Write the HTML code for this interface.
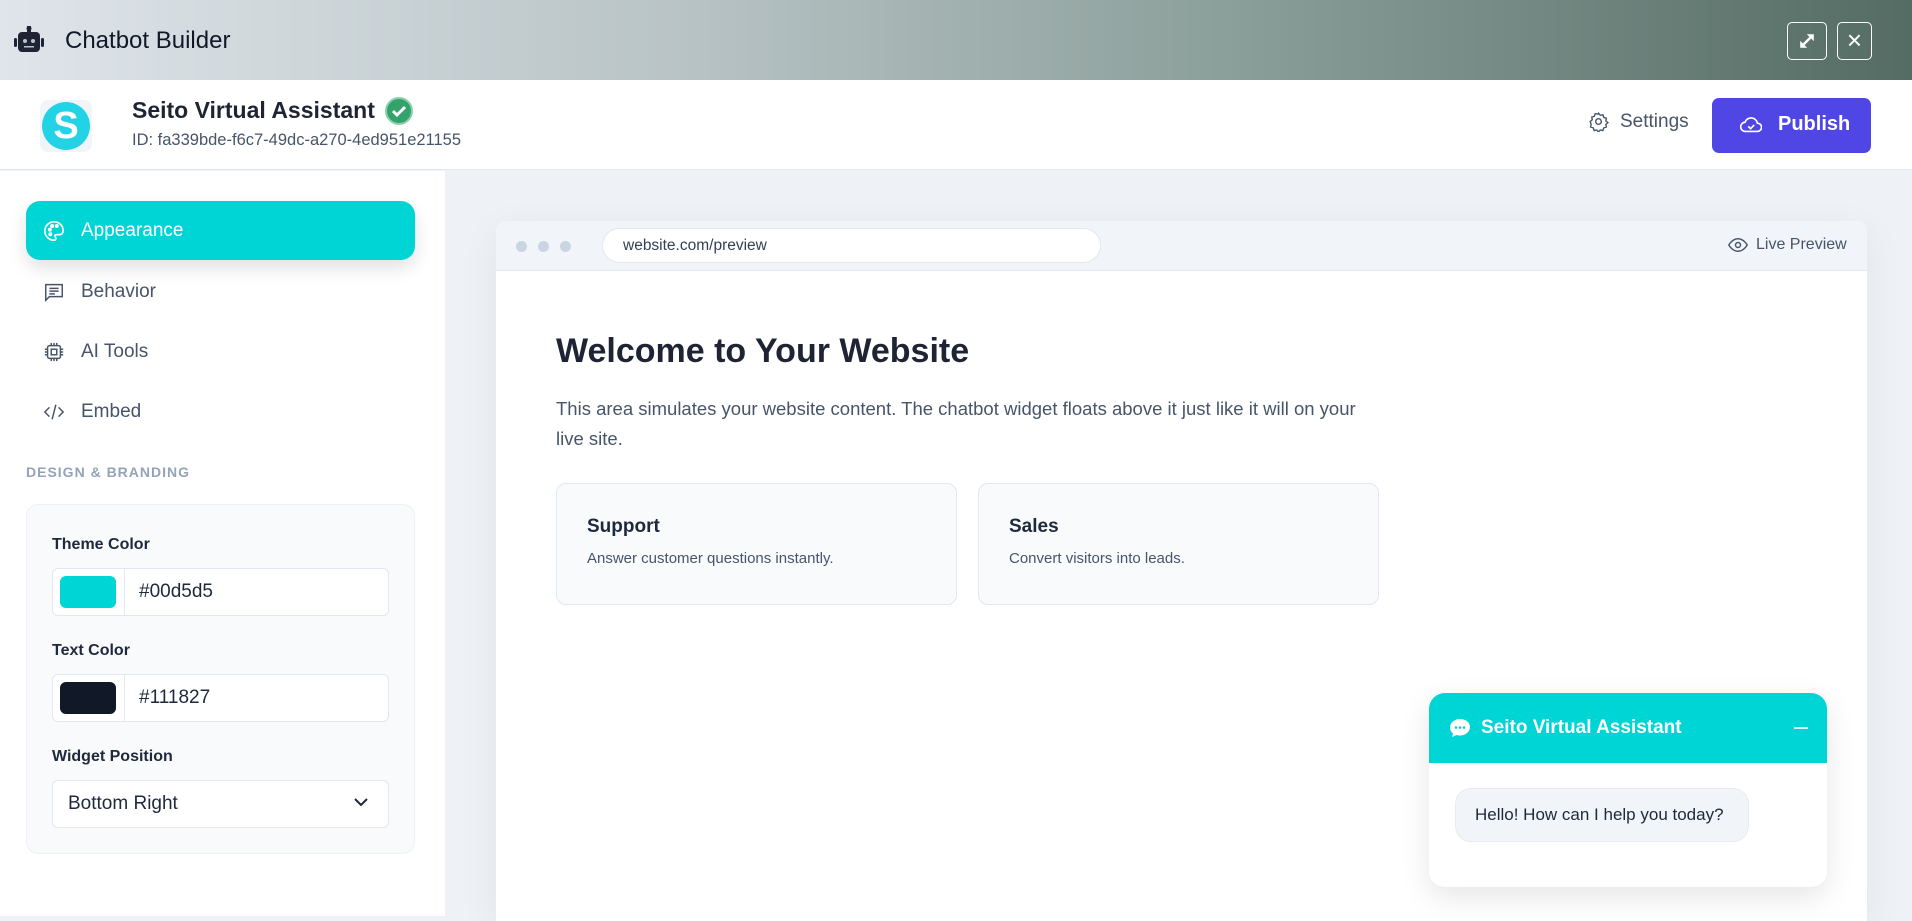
<!DOCTYPE html>
<html><head><meta charset="utf-8"><style>
*{box-sizing:border-box;margin:0;padding:0}
body{width:1912px;height:912px;overflow:hidden;font-family:"Liberation Sans",sans-serif;background:#eef1f5;position:relative;color:#1e293b}
.abs{position:absolute}
.top{left:0;top:0;width:1912px;height:80px;background:linear-gradient(90deg,#dfe5ea 0%,#b9c4c6 35%,#8a9e99 65%,#546c64 100%)}
.hdr{left:0;top:80px;width:1912px;height:90px;background:#fff;border-bottom:1px solid #e2e8f0}
.side{left:0;top:171px;width:445px;height:745px;background:#fff}
.nav{left:26px;width:389px;height:59px;border-radius:14px;display:flex;align-items:center;padding-left:17px;font-size:19px;color:#475569}
.nav svg{margin-right:16px}
.lbl{font-size:16px;font-weight:bold;color:#1e293b;left:52px}
.inp{left:52px;width:337px;height:48px;border:1px solid #e2e8f0;border-radius:6px;background:#fff;display:flex;align-items:center}
.sw{width:56px;height:32px;border-radius:6px;margin-left:7px;margin-right:8px}
.inp span{border-left:1px solid #e2e8f0;height:46px;line-height:46px;padding-left:14px;font-size:19px;color:#1e293b;flex:1}
.card{top:483px;width:401px;height:122px;border:1px solid #e2e8f0;border-radius:10px;background:#f8fafc;padding:32px 30px}
.card b{font-size:19px;display:block;margin-bottom:12px;color:#1e293b}
.card p{font-size:15px;color:#475569}
</style></head><body>
<div class="abs top"></div>
<svg class="abs" style="left:14px;top:26px" width="30" height="28" viewBox="0 0 30 28"><rect x="13" y="0" width="4" height="6" fill="#1e2433"/><circle cx="15" cy="2.5" r="2.5" fill="#1e2433"/><rect x="4" y="6" width="22" height="20" rx="4" fill="#1e2433"/><rect x="0" y="12" width="3" height="9" rx="1.5" fill="#1e2433"/><rect x="27" y="12" width="3" height="9" rx="1.5" fill="#1e2433"/><circle cx="11" cy="15" r="2" fill="#b9c4c6"/><circle cx="19" cy="15" r="2" fill="#b9c4c6"/><rect x="10" y="20" width="10" height="1.5" fill="#b9c4c6"/></svg>
<div class="abs" style="left:65px;top:27px;font-size:24px;color:#111827">Chatbot Builder</div>
<div class="abs" style="left:1787px;top:22px;width:40px;height:38px;border:1.5px solid #fff;border-radius:5px"></div>
<svg class="abs" style="left:1799px;top:33px" width="16" height="16" viewBox="0 0 20 20" stroke="#fff" stroke-width="3" fill="#fff"><path d="M5 15L15 5"/><path d="M11 2h7v7z" stroke-width="1"/><path d="M2 11v7h7z" stroke-width="1"/></svg>
<div class="abs" style="left:1837px;top:22px;width:35px;height:38px;border:1.5px solid #fff;border-radius:5px;color:#fff;font-size:26px;text-align:center;line-height:34px">×</div>

<div class="abs hdr"></div>
<div class="abs" style="left:40px;top:100px;width:52px;height:52px;border-radius:8px;background:#f1f5f9"></div>
<div class="abs" style="left:42px;top:102px;width:48px;height:48px;border-radius:50%;background:#22d3e6;color:#fff;font-weight:bold;font-size:38px;text-align:center;line-height:48px">S</div>
<div class="abs" style="left:132px;top:97px;font-size:23px;font-weight:bold;color:#1e2433">Seito Virtual Assistant</div>
<svg class="abs" style="left:385px;top:97px" width="28" height="28" viewBox="0 0 28 28"><circle cx="14" cy="14" r="13" fill="#34a36b" stroke="#8fd0ac" stroke-width="2"/><path d="M8 14l4 4 8-8" stroke="#fff" stroke-width="3" fill="none"/></svg>
<div class="abs" style="left:132px;top:131px;font-size:16.5px;color:#475569">ID: fa339bde-f6c7-49dc-a270-4ed951e21155</div>
<svg class="abs" style="left:1588px;top:111px" width="21" height="21" viewBox="0 0 24 24" fill="none" stroke="#475569" stroke-width="1.6"><circle cx="12" cy="12" r="3.2"/><path d="M12 2.5l2 2.4 3-.6 1 3 3 1-.6 3 2.4 2-2.4 2 .6 3-3 1-1 3-3-.6-2 2.4-2-2.4-3 .6-1-3-3-1 .6-3L2.5 12l2.4-2-.6-3 3-1 1-3 3 .6z"/></svg>
<div class="abs" style="left:1620px;top:111px;font-size:19px;color:#475569">Settings</div>
<div class="abs" style="left:1712px;top:98px;width:159px;height:55px;border-radius:7px;background:#5046e5"></div>
<svg class="abs" style="left:1740px;top:115px" width="22" height="20" viewBox="0 0 24 20" fill="none" stroke="#fff" stroke-width="1.8"><path d="M6 17a5 5 0 0 1-.5-10A7 7 0 0 1 19 8a4.5 4.5 0 0 1 0 9z"/><path d="M9 11.5l2.5 2.5 4-4"/></svg>
<div class="abs" style="left:1778px;top:113px;font-size:20px;font-weight:bold;color:#fff">Publish</div>

<div class="abs side"></div>
<div class="abs nav" style="top:201px;background:#00d5d5;color:#fff;box-shadow:0 8px 18px rgba(0,0,0,.12)"><svg width="22" height="22" viewBox="0 0 24 24" fill="none" stroke="#fff" stroke-width="1.8"><path d="M12 2a10 10 0 0 0 0 20c1.5 0 2-1 2-2s-1-1.5-1-2.5 1-1.5 2-1.5h3a4 4 0 0 0 4-4C22 6 17.5 2 12 2z"/><circle cx="7.5" cy="10.5" r="1.3" fill="#fff"/><circle cx="10" cy="6.5" r="1.3" fill="#fff"/><circle cx="15" cy="6.5" r="1.3" fill="#fff"/><circle cx="8" cy="15.5" r="1.3" fill="#fff"/></svg>Appearance</div>
<div class="abs nav" style="top:262px"><svg width="22" height="22" viewBox="0 0 24 24" fill="none" stroke="#475569" stroke-width="1.6"><path d="M3 4h18v13H7l-4 4z"/><path d="M7 8h10M7 11h10M7 14h6"/></svg>Behavior</div>
<div class="abs nav" style="top:322px"><svg width="22" height="22" viewBox="0 0 24 24" fill="none" stroke="#475569" stroke-width="1.6"><rect x="5" y="5" width="14" height="14" rx="2"/><rect x="9" y="9" width="6" height="6"/><path d="M9 2v3M12 2v3M15 2v3M9 19v3M12 19v3M15 19v3M2 9h3M2 12h3M2 15h3M19 9h3M19 12h3M19 15h3"/></svg>AI Tools</div>
<div class="abs nav" style="top:382px"><svg width="22" height="22" viewBox="0 0 24 24" fill="none" stroke="#475569" stroke-width="1.6"><path d="M7 7l-5 5 5 5M17 7l5 5-5 5M14 4l-4 16"/></svg>Embed</div>
<div class="abs" style="left:26px;top:464px;font-size:14px;font-weight:bold;color:#94a3b8;letter-spacing:1px">DESIGN &amp; BRANDING</div>
<div class="abs" style="left:26px;top:504px;width:389px;height:350px;border-radius:12px;background:#f8fafc;border:1px solid #eef1f5"></div>
<div class="abs lbl" style="top:536px">Theme Color</div>
<div class="abs inp" style="top:568px"><div class="sw" style="background:#00d5d5"></div><span>#00d5d5</span></div>
<div class="abs lbl" style="top:642px">Text Color</div>
<div class="abs inp" style="top:674px"><div class="sw" style="background:#111827"></div><span>#111827</span></div>
<div class="abs lbl" style="top:748px">Widget Position</div>
<div class="abs inp" style="top:780px;padding-left:15px;font-size:19px;color:#1e293b">Bottom Right</div>
<svg class="abs" style="left:353px;top:796px" width="16" height="12" viewBox="0 0 16 12" fill="none" stroke="#1e293b" stroke-width="2"><path d="M2 3l6 6 6-6"/></svg>

<div class="abs" style="left:496px;top:221px;width:1371px;height:700px;background:#fff;border-radius:10px 10px 0 0;box-shadow:0 10px 40px rgba(0,0,0,.06)"></div>
<div class="abs" style="left:496px;top:221px;width:1371px;height:50px;background:#f1f4f8;border-radius:10px 10px 0 0;border-bottom:1px solid #e2e8f0"></div>
<div class="abs" style="left:516px;top:241px;width:11px;height:11px;border-radius:50%;background:#cbd5e1"></div>
<div class="abs" style="left:538px;top:241px;width:11px;height:11px;border-radius:50%;background:#cbd5e1"></div>
<div class="abs" style="left:560px;top:241px;width:11px;height:11px;border-radius:50%;background:#cbd5e1"></div>
<div class="abs" style="left:602px;top:228px;width:499px;height:35px;border-radius:18px;background:#fff;border:1px solid #e2e8f0;padding-left:20px;line-height:33px;font-size:15.5px;color:#334155">website.com/preview</div>
<svg class="abs" style="left:1728px;top:237px" width="20" height="16" viewBox="0 0 24 18" fill="none" stroke="#475569" stroke-width="1.7"><path d="M1 9s4-7.5 11-7.5S23 9 23 9s-4 7.5-11 7.5S1 9 1 9z"/><circle cx="12" cy="9" r="3"/></svg>
<div class="abs" style="left:1756px;top:236px;font-size:16px;color:#475569">Live Preview</div>
<div class="abs" style="left:556px;top:332px;font-size:34px;font-weight:bold;color:#1e2433">Welcome to Your Website</div>
<div class="abs" style="left:556px;top:394px;width:815px;font-size:18.5px;line-height:30px;color:#475569">This area simulates your website content. The chatbot widget floats above it just like it will on your live site.</div>
<div class="abs card" style="left:556px"><b>Support</b><p>Answer customer questions instantly.</p></div>
<div class="abs card" style="left:978px"><b>Sales</b><p>Convert visitors into leads.</p></div>

<div class="abs" style="left:1429px;top:693px;width:398px;height:194px;border-radius:16px;background:#fff;box-shadow:0 10px 30px rgba(0,0,0,.1);overflow:hidden">
<div style="height:70px;background:#00d5d5;display:flex;align-items:center;padding-left:20px;color:#fff;font-weight:bold;font-size:19px"><svg width="22" height="20" viewBox="0 0 22 20" style="margin-right:10px"><path d="M11 1C5.5 1 1 4.8 1 9.5c0 2.4 1.1 4.5 3 6L3 19l4.5-2c1.1.4 2.3.5 3.5.5 5.5 0 10-3.8 10-8.5S16.5 1 11 1z" fill="#fff"/><circle cx="7" cy="9.5" r="1.3" fill="#00d5d5"/><circle cx="11" cy="9.5" r="1.3" fill="#00d5d5"/><circle cx="15" cy="9.5" r="1.3" fill="#00d5d5"/></svg>Seito Virtual Assistant<div style="position:absolute;left:365px;top:34px;width:14px;height:1.5px;background:#e0ffff"></div></div>
<div style="position:absolute;left:26px;top:95px;width:294px;height:54px;border-radius:16px;background:#f1f4f8;border:1px solid #e8ecf1;line-height:52px;padding-left:19px;font-size:17px;color:#1e293b">Hello! How can I help you today?</div>
</div>
</body></html>
